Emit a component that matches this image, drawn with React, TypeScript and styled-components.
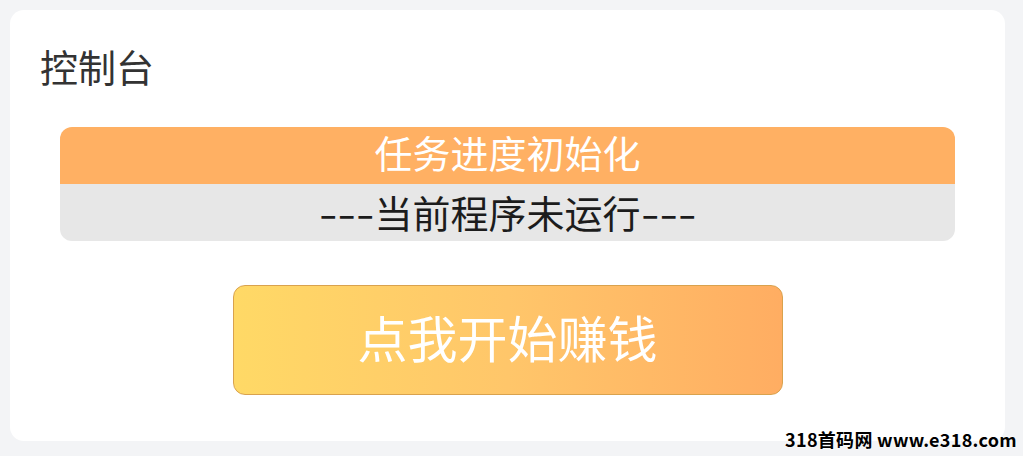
import React from "react";
import styled, { createGlobalStyle } from "styled-components";

const Global = createGlobalStyle`
  html, body { margin: 0; padding: 0; background: #f3f4f6; }
  body { font-family: "Noto Sans CJK SC", "Noto Sans", sans-serif; }
`;

const Page = styled.div`
  position: relative;
  width: 1023px;
  height: 456px;
  padding: 10px 18px 15px 10px;
  box-sizing: border-box;
  background: #f3f4f6;
`;

const Card = styled.div`
  background: #ffffff;
  border-radius: 14px;
  height: 431px;
  box-sizing: border-box;
  padding: 30px 50px 0 50px;
  display: flex;
  flex-direction: column;
`;

const Title = styled.h1`
  margin: 0 0 0 -20px;
  font-size: 38px;
  font-weight: 400;
  line-height: 52px;
  height: 52px;
  color: #333333;
`;

const Progress = styled.div`
  margin-top: 35px;
  display: flex;
  flex-direction: column;
`;

const Row = styled.div<{ $variant: "head" | "body" }>`
  height: 57px;
  display: flex;
  align-items: center;
  justify-content: center;
  font-size: 38px;
  line-height: 42px;
  padding-bottom: ${(p) => (p.$variant === "head" ? "8px" : "2px")};
  box-sizing: border-box;
  white-space: nowrap;
  border-radius: ${(p) => (p.$variant === "head" ? "12px 12px 0 0" : "0 0 12px 12px")};
  background: ${(p) => (p.$variant === "head" ? "#ffb063" : "#e7e7e7")};
  color: ${(p) => (p.$variant === "head" ? "#ffffff" : "#1c1c1c")};
`;

const Dashes = styled.span`
  display: inline-block;
  transform: scaleX(1.4);
  margin: 0 8px;
`;

const ButtonWrap = styled.div`
  display: flex;
  justify-content: center;
  margin-top: 44px;
`;

const StartButton = styled.button`
  width: 550px;
  height: 110px;
  border: 1px solid #d9a24e;
  border-radius: 12px;
  background: linear-gradient(90deg, #ffd966 0%, #ffc66a 50%, #ffad62 100%);
  color: #ffffff;
  font-family: "Noto Sans CJK SC", "Noto Sans", sans-serif;
  font-size: 50px;
  line-height: 60px;
  cursor: pointer;
  padding: 0 0 8px 0;
`;

const Watermark = styled.div`
  position: absolute;
  right: 6px;
  bottom: 7px;
  font-family: "Noto Sans CJK SC", "Noto Sans", sans-serif;
  font-weight: 700;
  font-size: 18px;
  line-height: 20px;
  color: #000000;
  text-shadow: 0 0 2px #ffffff, 0 0 2px #ffffff;
  letter-spacing: 0.3px;
`;

export default function App() {
  return (
    <>
      <Global />
      <Page>
        <Card>
          <Title>控制台</Title>
          <Progress>
            <Row $variant="head">任务进度初始化</Row>
            <Row $variant="body">
              <Dashes>---</Dashes>当前程序未运行<Dashes>---</Dashes>
            </Row>
          </Progress>
          <ButtonWrap>
            <StartButton>点我开始赚钱</StartButton>
          </ButtonWrap>
        </Card>
        <Watermark>318首码网 www.e318.com</Watermark>
      </Page>
    </>
  );
}
